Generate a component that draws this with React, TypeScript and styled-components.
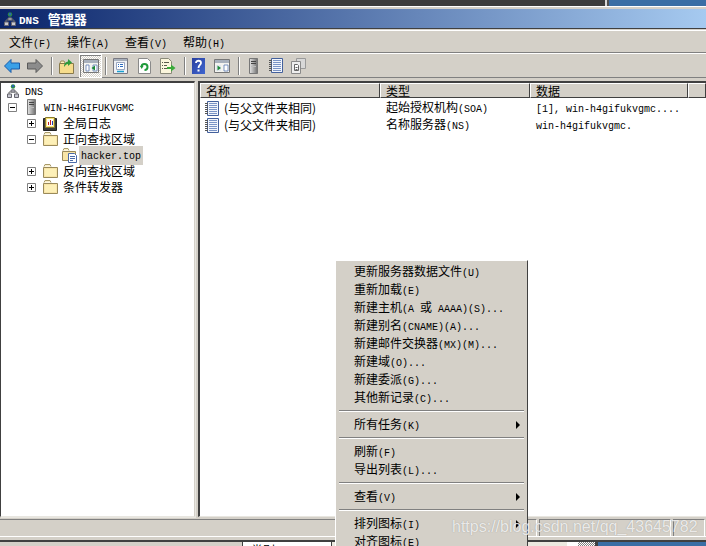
import { ReactNode } from 'react';
import styled, { createGlobalStyle } from 'styled-components';

const GlobalStyle = createGlobalStyle`
    html, body {
        margin: 0;
        padding: 0;
        background: #d4d0c8;
        overflow: hidden;
    }

    body {
        font-family: "Noto Sans CJK SC", "Liberation Sans", sans-serif;
        font-size: 12px;
        color: #000;
    }
`;

const Page = styled.div`
    position: relative;
    display: flex;
    flex-direction: column;
    width: 706px;
    height: 546px;
    overflow: hidden;
    background: #d4d0c8;
`;

const DesktopStrip = styled.div`
    display: flex;
    justify-content: flex-end;
    flex: none;
    height: 6px;
    background: #3c3c3c;
    border-bottom: 1px solid #fff;
`;

const DesktopBlue = styled.div`
    width: 97px;
    background: #3a6ea5;
    border-left: 2px solid #505050;
    box-shadow: -2px 0 0 #d8d8d8;
`;

const TitleBar = styled.div`
    display: flex;
    align-items: center;
    gap: 3px;
    flex: none;
    height: 19px;
    margin-top: 2px;
    padding-left: 4px;
    color: #fff;
    font-size: 13px;
    font-weight: bold;
    background: linear-gradient(90deg, #0a246a, #a6caf0);
    border-bottom: 1px solid #404040;
`;

const TitleDns = styled.span`
    font-family: "Liberation Mono", monospace;
    font-size: 11px;
    margin-right: 9px;
`;

const MenuBar = styled.div`
    display: flex;
    flex: none;
    height: 21px;
    align-items: center;
    margin-top: 1px;
    padding-left: 1px;
    border-top: 1px solid #fff;
    border-bottom: 1px solid #808080;
`;

const MenuTitle = styled.span`
    padding: 0 8px;
    white-space: nowrap;
`;

const Toolbar = styled.div`
    display: flex;
    align-items: center;
    flex: none;
    height: 23px;
    padding-left: 4px;
    border-top: 1px solid #fff;
    border-bottom: 1px solid #808080;
`;

const ToolIcon = styled.span<{ $w?: number; $ml?: number; $active?: boolean }>`
    display: flex;
    align-items: center;
    justify-content: center;
    flex: none;
    width: ${p => p.$w ?? 16}px;
    height: 22px;
    margin-left: ${p => p.$ml ?? 0}px;
    ${p =>
        p.$active
            ? `
        background: repeating-conic-gradient(#fff 0 25%, #d4d0c8 0 50%) 0 0 / 2px 2px;
        outline: 1px solid #fff;
        box-shadow: inset 1px 1px 0 #808080;
    `
            : ''}
`;

const ToolSep = styled.span<{ $ml: number }>`
    flex: none;
    width: 1px;
    height: 18px;
    margin-left: ${p => p.$ml}px;
    background: #808080;
    box-shadow: 1px 0 0 #fff;
`;

const Panes = styled.div`
    display: flex;
    flex: none;
    height: 436px;
    margin-top: 3px;
    gap: 3px;
`;

const TreePane = styled.div`
    flex: none;
    width: 195px;
    box-sizing: border-box;
    background: #fff;
    border-top: 2px solid #404040;
    border-left: 1px solid #404040;
    border-right: 1px solid #d4d0c8;
    border-bottom: 1px solid #e8e6e0;
    box-shadow: 1px 1px 0 #e8e6e0;
`;

const TreeRow = styled.div<{ $indent: number }>`
    display: flex;
    align-items: center;
    height: 16px;
    padding-left: ${p => p.$indent}px;
    white-space: nowrap;
`;

const Expander = styled.span`
    display: flex;
    flex: none;
    width: 9px;
    height: 9px;
    margin-right: 7px;
`;

const ServerSlot = styled.span`
    display: flex;
    margin-left: 3px;
`;

const TreeLabel = styled.span<{ $selected?: boolean; $ml?: number }>`
    margin-left: ${p => p.$ml ?? 5}px;
    padding: 0 ${p => (p.$selected ? 2 : 0)}px;
    line-height: 16px;
    background: ${p => (p.$selected ? '#d4d0c8' : 'transparent')};
`;

const ListPane = styled.div`
    flex: 1;
    box-sizing: border-box;
    background: #fff;
    border-top: 2px solid #404040;
    border-left: 2px solid #404040;
    border-bottom: 1px solid #e8e6e0;
`;

const HeaderRow = styled.div`
    display: grid;
    grid-template-columns: 180px 150px 158px 1fr;
    height: 15px;
    background: #d4d0c8;
`;

const HeaderCell = styled.div`
    box-sizing: border-box;
    padding-left: 5px;
    line-height: 13px;
    border-top: 1px solid #fff;
    border-left: 1px solid #fff;
    border-right: 1px solid #404040;
    border-bottom: 1px solid #404040;
`;

const DataRow = styled.div`
    display: grid;
    grid-template-columns: 180px 150px 158px 1fr;
    height: 17px;
    line-height: 17px;
    align-items: center;
    white-space: nowrap;
`;

const NameCell = styled.div`
    display: flex;
    align-items: center;
    gap: 5px;
    padding-left: 5px;
`;

const NameLabel = styled.span`
    margin-top: -2px;
`;

const Cell = styled.div`
    padding-left: 6px;
`;

const StatusBar = styled.div`
    display: flex;
    gap: 2px;
    flex: none;
    height: 17px;
    margin-top: 2px;
    border-bottom: 1px solid #fff;
`;

const StatusCell = styled.div<{ $w: number }>`
    flex: none;
    width: ${p => p.$w}px;
    box-sizing: border-box;
    border-top: 1px solid #808080;
    border-left: 1px solid #808080;
    border-right: 1px solid #fff;

    &:first-child {
        border-left: 0;
    }
`;

const TaskStrip = styled.div`
    display: flex;
    flex: none;
    height: 5px;
    margin-top: 3px;
    border-top: 2px solid #404040;
    overflow: hidden;
`;

const TaskGap = styled.div<{ $w: number; $bg: string }>`
    flex: none;
    width: ${p => p.$w}px;
    background: ${p => p.$bg};
`;

const TaskTab = styled.div`
    flex: none;
    width: 90px;
    box-sizing: border-box;
    padding-left: 8px;
    line-height: 16px;
    background: #fff;
    border-left: 1px solid #404040;
    border-right: 1px solid #404040;
`;

const TaskHatch = styled.div`
    flex: none;
    width: 17px;
    background: repeating-conic-gradient(#808080 0 25%, #fff 0 50%) 0 0 / 2px 2px;
`;

const TaskBlue = styled.div`
    flex: 1;
    background: #3a6ea5;
    border-left: 3px solid #404040;
`;

const ContextMenu = styled.div`
    position: absolute;
    left: 335px;
    top: 260px;
    width: 193px;
    height: 300px;
    box-sizing: border-box;
    padding: 2px;
    background: #d4d0c8;
    border-top: 1px solid #fff;
    border-left: 1px solid #fff;
    border-right: 1px solid #404040;
`;

const ContextItem = styled.div`
    position: relative;
    height: 18px;
    line-height: 16px;
    padding-left: 16px;
    white-space: nowrap;
`;

const SubArrow = styled.span`
    position: absolute;
    right: 5px;
    top: 5px;
    width: 0;
    height: 0;
    border-left: 4px solid #000;
    border-top: 4px solid transparent;
    border-bottom: 4px solid transparent;
`;

const ContextSep = styled.div`
    height: 2px;
    margin: 3px 1px 4px;
    background: #808080;
    border-bottom: 1px solid #fff;
    box-sizing: border-box;
`;

const Watermark = styled.div`
    position: absolute;
    left: 452px;
    top: 517px;
    font-family: "Liberation Sans", Arial, sans-serif;
    font-size: 16px;
    line-height: 20px;
    color: rgba(255, 255, 255, 0.8);
    text-shadow: 0 0 1px rgba(90, 90, 90, 0.5);
    white-space: nowrap;
`;

const Latin = styled.span`
    font-family: "Liberation Mono", "DejaVu Sans Mono", monospace;
    font-size: 10px;
`;

// half-width runs are 6px wide in the bitmap font, so they get the mono face
const Txt = ({ children }: { children: string }) => (
    <>
        {children.split(/([\x20-\x7e]+)/).map((part, i) =>
            i % 2 ? <Latin key={i}>{part}</Latin> : part
        )}
    </>
);

const ServerNetIcon = ({ size = 12 }: { size?: number }) => (
    <svg width={size} height={size + 2} viewBox="0 0 12 14">
        <circle cx="6" cy="2.5" r="2.2" fill="#2c8a4a" />
        <path d="M5 1h2v2H5z" fill="#2a62b8" />
        <path d="M6 5v3M2 10V8h8v2" fill="none" stroke="#6b6b6b" />
        <path d="M4 6h4v2H4zM.5 10h4v3.500h-4zM7.500 10h4v3.500h-4z" fill="#c9c9d2" stroke="#66666e" strokeWidth="1" />
    </svg>
);

const TowerIcon = ({ w = 9, h = 16 }: { w?: number; h?: number }) => (
    <svg width={w} height={h} viewBox="0 0 9 16">
        <defs>
            <linearGradient id="tower" x1="0" x2="1" y1="0" y2="0">
                <stop offset="0" stopColor="#e6e6e6" />
                <stop offset="1" stopColor="#6e6e6e" />
            </linearGradient>
        </defs>
        <path d="M.5.5h8v15h-8z" fill="url(#tower)" stroke="#777" />
        <path d="M2 3.500h5M2 5.500h5" stroke="#444" />
        <path d="M2 8h5v1H2z" fill="#bbb" />
    </svg>
);

const Folder = () => (
    <svg width="15" height="14" viewBox="0 0 15 14">
        <path d="M.5 3.500V13.500h14V3.500z" fill="#f8e5a8" stroke="#9a8a5a" />
        <path d="M1 2.500l1-2h5l1 2" fill="#fbf0c8" stroke="#a89a6a" />
        <path d="M2 5h11v7H2z" fill="#fdf0b8" />
    </svg>
);

const ZoneIcon = () => (
    <svg width="15" height="15" viewBox="0 0 15 15">
        <path d="M.5 3.500V12.500h13V3.500z" fill="#f8e5a8" stroke="#9a8a5a" />
        <path d="M1 2.500l1-2h4l1 2" fill="#fbf0c8" stroke="#a89a6a" />
        <path d="M6.500 5.500h6l2 2v7h-8z" fill="#fff" stroke="#4a6aa8" />
        <path d="M8 8.500h5M8 10.500h5M8 12.500h3" stroke="#4a6aa8" />
    </svg>
);

const LogIcon = () => (
    <svg width="15" height="15" viewBox="0 0 15 15">
        <path d="M.5 2.500h13v12H.5z" fill="#3c3c3c" stroke="#222" />
        <path d="M2.500 1.500h9v10h-9z" fill="#f6e27a" stroke="#8a7a2a" />
        <path d="M4 3h6v7H4z" fill="#fff" />
        <path d="M5.500 9V6M7.500 9V4" stroke="#c02020" />
        <path d="M9.500 9V5" stroke="#2040c0" />
    </svg>
);

const RecordIcon = ({ size = 14 }: { size?: number }) => (
    <svg width={size} height={size + 1} viewBox="0 0 14 15">
        <path d="M2.500.5h11v14h-11z" fill="#f2f5fb" stroke="#43609c" />
        <path d="M4 2.500h8M4 4.500h8M4 6.500h8M4 8.500h8M4 10.500h8M4 12.500h8" stroke="#7a94c6" />
        <path d="M0 2.500h3M0 4.500h3M0 6.500h3M0 8.500h3M0 10.500h3M0 12.500h3" stroke="#555" />
    </svg>
);

const ExpandBox = ({ open }: { open?: boolean }) => (
    <Expander>
        <svg width="9" height="9" viewBox="0 0 9 9">
            <path d="M.5.5h8v8h-8z" fill="#fff" stroke="#808080" />
            <path d={open ? 'M2 4.500h5' : 'M2 4.500h5M4.500 2v5'} stroke="#000" />
        </svg>
    </Expander>
);

const ArrowIcon = ({ dir, fill, stroke }: { dir: 'l' | 'r'; fill: string; stroke: string }) => (
    <svg width="16" height="14" viewBox="0 0 16 14">
        <path
            d={dir === 'l' ? 'M.5 7L7 .5v3.500h8.500v6H7v3.500z' : 'M15.500 7L9 .5v3.500H.5v6H9v3.500z'}
            fill={fill}
            stroke={stroke}
        />
    </svg>
);

const UpFolderIcon = () => (
    <svg width="15" height="17" viewBox="0 0 15 17">
        <path d="M.5 6.500v10h14v-10z" fill="#f6dc8c" stroke="#8a7a4a" />
        <path d="M1 6l1-2h3l1 2" fill="#fbeebc" stroke="#9a8a5a" />
        <path d="M5 10C5 6 7 5 9 4.500V2l4 3.500L9 9V7C7.500 7 6.500 8 5 10z" fill="#2e9a3a" />
    </svg>
);

const PanelIcon = ({ mode }: { mode: 'hide' | 'show' }) => (
    <svg width="16" height="14" viewBox="0 0 16 14">
        <path d="M.5.5h15v13H.5z" fill="#f4f4f0" stroke="#777" />
        <path d="M1 1h14v3H1z" fill="#a8b0bc" />
        {mode === 'hide' ? (
            <>
                <path d="M3 6h3v6H3zM10 6h4v6h-4z" fill="#fff" stroke="#5a78b0" strokeWidth=".8" />
                <path d="M12 6.500v5L8.500 9z" fill="#1e8a3a" />
            </>
        ) : (
            <>
                <path d="M2 6h5v6H2z" fill="#e4e8f0" />
                <path d="M3.500 6.500v5L7 9z" fill="#1e8a3a" />
                <path d="M10 6h4v6h-4z" fill="#fff" stroke="#5a78b0" strokeWidth=".8" />
            </>
        )}
    </svg>
);

const PropsIcon = () => (
    <svg width="15" height="16" viewBox="0 0 15 16">
        <path d="M.5.5h14v15H.5z" fill="#eef0f4" stroke="#7a7a82" />
        <path d="M1 1h13v2H1z" fill="#a8b0bc" />
        <path d="M3.500 4.500h8v7h-8z" fill="#fff" stroke="#9aa6c0" />
        <path d="M5 6.500h1M5 8.500h1M7 6.500h3M7 8.500h3" stroke="#2a6ac0" />
        <path d="M4 13.500h7" stroke="#1aa0d0" strokeWidth="1.500" />
    </svg>
);

const RefreshIcon = () => (
    <svg width="13" height="16" viewBox="0 0 13 16">
        <path d="M.5.5h9l3 3v12H.5z" fill="#fff" stroke="#8a8a8a" />
        <path d="M3.500 9a3 3 0 1 1 3 3" fill="none" stroke="#1f9a3a" strokeWidth="2" />
        <path d="M2 8h3.500L3.700 11z" fill="#1f9a3a" />
    </svg>
);

const ExportIcon = () => (
    <svg width="16" height="16" viewBox="0 0 16 16">
        <path d="M.5.5h8l3 3v12H.5z" fill="#fbf6dc" stroke="#8a8a7a" />
        <path d="M2 4.500h1M4 4.500h5M2 7.500h1M4 7.500h3M2 10.500h1M4 10.500h3" stroke="#5a5a4a" />
        <path d="M7 9h4V6.500L15.500 10 11 13.500V11H7z" fill="#3aaa3a" />
    </svg>
);

const HelpIcon = () => (
    <svg width="13" height="16" viewBox="0 0 13 16">
        <defs>
            <linearGradient id="help" x1="0" x2="1" y1="0" y2="1">
                <stop offset="0" stopColor="#2a3f9e" />
                <stop offset="1" stopColor="#3f66d0" />
            </linearGradient>
        </defs>
        <path d="M0 0h13v16H0z" fill="url(#help)" />
        <path d="M4 5c0-3 5-3 5 0 0 2-2.500 2-2.500 5" fill="none" stroke="#fff" strokeWidth="1.800" />
        <path d="M5.500 11.500h2v2h-2z" fill="#fff" />
    </svg>
);

const CopyIcon = () => (
    <svg width="15" height="16" viewBox="0 0 15 16">
        <path d="M5.500.5h9v10h-9z" fill="#d8d8d8" stroke="#9a9a9a" />
        <path d="M.5 3.500h9v12h-9z" fill="#eee" stroke="#8a8a8a" />
        <path d="M3.500 6.500h3l1 1v5h-4z" fill="#fff" stroke="#666" />
        <path d="M4.500 9.500h2M4.500 11.500h2" stroke="#666" />
    </svg>
);

const menus = ['文件(F)', '操作(A)', '查看(V)', '帮助(H)'];

const records = [
    { type: '起始授权机构(SOA)', data: '[1], win-h4gifukvgmc....' },
    { type: '名称服务器(NS)', data: 'win-h4gifukvgmc.' },
];

const contextGroups = [
    [
        '更新服务器数据文件(U)',
        '重新加载(E)',
        '新建主机(A 或 AAAA)(S)...',
        '新建别名(CNAME)(A)...',
        '新建邮件交换器(MX)(M)...',
        '新建域(O)...',
        '新建委派(G)...',
        '其他新记录(C)...',
    ],
    ['所有任务(K)>'],
    ['刷新(F)', '导出列表(L)...'],
    ['查看(V)>'],
    ['排列图标(I)>', '对齐图标(E)'],
];

const TreeItem = ({
    indent,
    open,
    icon,
    children,
}: {
    indent: number;
    open?: boolean;
    icon: ReactNode;
    children: string;
}) => (
    <TreeRow $indent={indent}>
        <ExpandBox open={open} />
        {icon}
        <TreeLabel>
            <Txt>{children}</Txt>
        </TreeLabel>
    </TreeRow>
);

export default function App() {
    return (
        <Page>
            <GlobalStyle />
            <DesktopStrip>
                <DesktopBlue />
            </DesktopStrip>
            <TitleBar>
                <ServerNetIcon />
                <span>
                    <TitleDns>DNS</TitleDns>管理器
                </span>
            </TitleBar>
            <MenuBar>
                {menus.map(m => (
                    <MenuTitle key={m}>
                        <Txt>{m}</Txt>
                    </MenuTitle>
                ))}
            </MenuBar>
            <Toolbar>
                <ToolIcon>
                    <ArrowIcon dir="l" fill="#3aa0e8" stroke="#1a5aa8" />
                </ToolIcon>
                <ToolIcon $ml={7}>
                    <ArrowIcon dir="r" fill="#8c8c8c" stroke="#5a5a5a" />
                </ToolIcon>
                <ToolSep $ml={8} />
                <ToolIcon $ml={7} $w={15}>
                    <UpFolderIcon />
                </ToolIcon>
                <ToolIcon $ml={6} $w={21} $active>
                    <PanelIcon mode="hide" />
                </ToolIcon>
                <ToolSep $ml={4} />
                <ToolIcon $ml={7} $w={15}>
                    <PropsIcon />
                </ToolIcon>
                <ToolIcon $ml={10} $w={13}>
                    <RefreshIcon />
                </ToolIcon>
                <ToolIcon $ml={9}>
                    <ExportIcon />
                </ToolIcon>
                <ToolSep $ml={8} />
                <ToolIcon $ml={7} $w={13}>
                    <HelpIcon />
                </ToolIcon>
                <ToolIcon $ml={9}>
                    <PanelIcon mode="show" />
                </ToolIcon>
                <ToolSep $ml={8} />
                <ToolIcon $ml={10} $w={9}>
                    <TowerIcon />
                </ToolIcon>
                <ToolIcon $ml={11} $w={14}>
                    <RecordIcon />
                </ToolIcon>
                <ToolIcon $ml={8} $w={15}>
                    <CopyIcon />
                </ToolIcon>
            </Toolbar>
            <Panes>
                <TreePane>
                    <TreeRow $indent={6}>
                        <ServerNetIcon />
                        <TreeLabel $ml={6}>
                            <Txt>DNS</Txt>
                        </TreeLabel>
                    </TreeRow>
                    <TreeRow $indent={7}>
                        <ExpandBox open />
                        <ServerSlot>
                            <TowerIcon />
                        </ServerSlot>
                        <TreeLabel $ml={8}>
                            <Txt>WIN-H4GIFUKVGMC</Txt>
                        </TreeLabel>
                    </TreeRow>
                    <TreeItem indent={26} icon={<LogIcon />}>
                        全局日志
                    </TreeItem>
                    <TreeItem indent={26} open icon={<Folder />}>
                        正向查找区域
                    </TreeItem>
                    <TreeRow $indent={61}>
                        <ZoneIcon />
                        <TreeLabel $selected $ml={2}>
                            <Txt>hacker.top</Txt>
                        </TreeLabel>
                    </TreeRow>
                    <TreeItem indent={26} icon={<Folder />}>
                        反向查找区域
                    </TreeItem>
                    <TreeItem indent={26} icon={<Folder />}>
                        条件转发器
                    </TreeItem>
                </TreePane>
                <ListPane>
                    <HeaderRow>
                        <HeaderCell>名称</HeaderCell>
                        <HeaderCell>类型</HeaderCell>
                        <HeaderCell>数据</HeaderCell>
                        <HeaderCell />
                    </HeaderRow>
                    {records.map(r => (
                        <DataRow key={r.type}>
                            <NameCell>
                                <RecordIcon />
                                <NameLabel>(与父文件夹相同)</NameLabel>
                            </NameCell>
                            <Cell>
                                <Txt>{r.type}</Txt>
                            </Cell>
                            <Cell>
                                <Latin>{r.data}</Latin>
                            </Cell>
                        </DataRow>
                    ))}
                </ListPane>
            </Panes>
            <StatusBar>
                <StatusCell $w={537} />
                <StatusCell $w={132} />
                <StatusCell $w={32} />
            </StatusBar>
            <TaskStrip>
                <TaskGap $w={242} $bg="#d4d0c8" />
                <TaskTab>类别</TaskTab>
                <TaskGap $w={235} $bg="#ece9e0" />
                <TaskGap $w={11} $bg="#fff" />
                <TaskHatch />
                <TaskBlue />
            </TaskStrip>
            <ContextMenu>
                {contextGroups.map((group, i) => (
                    <div key={i}>
                        {i > 0 && <ContextSep />}
                        {group.map(item => (
                            <ContextItem key={item}>
                                <Txt>{item.replace('>', '')}</Txt>
                                {item.endsWith('>') && <SubArrow />}
                            </ContextItem>
                        ))}
                    </div>
                ))}
            </ContextMenu>
            <Watermark>https://blog.csdn.net/qq_43645782</Watermark>
        </Page>
    );
}
